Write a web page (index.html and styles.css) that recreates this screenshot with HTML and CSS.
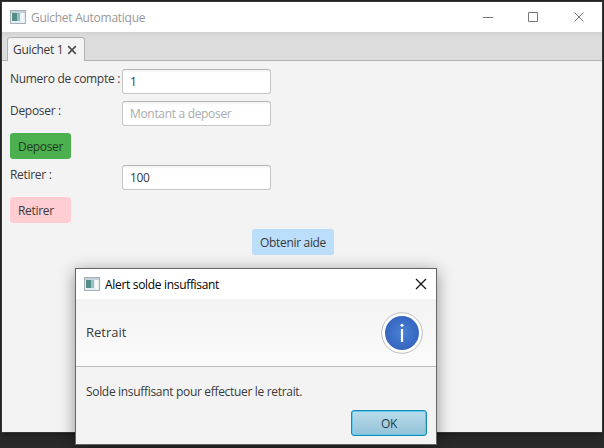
FILE: index.html
```html
<!DOCTYPE html>
<html lang="fr">
<head>
<meta charset="utf-8">
<title>Guichet Automatique</title>
<link rel="stylesheet" href="styles.css">
</head>
<body>
<main class="desktop">
  <section class="window main-window">
    <header class="titlebar">
      <svg class="app-icon" width="16" height="14" viewBox="0 0 16 14"><rect x=".5" y=".5" width="15" height="13" fill="#e4edf2" stroke="#a5b0b7"/><rect x="1" y="1" width="14" height="2" fill="#c6d2da"/><rect x="2" y="3" width="5" height="8" fill="#518f88"/><rect x="7" y="3" width="3" height="8" fill="#9abdc5"/><path d="M12.500 3v9" stroke="#fff" stroke-width="2"/></svg>
      <h1 class="title">Guichet Automatique</h1>
      <svg class="controls" width="104" height="12" viewBox="0 0 104 12" fill="none" stroke="#777"><path d="M1 6.500h10M46.500 1.500h9v9h-9zM92.500 1.500l9 9m0-9l-9 9"/></svg>
    </header>
    <nav class="tabs">
      <div class="tab"><span>Guichet 1</span><svg width="10" height="10" viewBox="0 0 10 10" fill="none" stroke="#505050" stroke-width="1.700"><path d="M1.200 1.200l7.600 7.600m0-7.600l-7.600 7.600"/></svg></div>
    </nav>
    <form class="form">
      <label for="compte">Numero de compte :</label><input id="compte" type="text" value="1">
      <label for="depot">Deposer :</label><input id="depot" type="text" placeholder="Montant a deposer">
      <button class="btn green" type="button">Deposer</button>
      <label for="retrait">Retirer :</label><input id="retrait" type="text" value="100">
      <button class="btn pink" type="button">Retirer</button>
      <button class="btn help" type="button">Obtenir aide</button>
    </form>
  </section>
  <section class="window dialog">
    <header class="titlebar">
      <svg class="app-icon" width="16" height="14" viewBox="0 0 16 14"><rect x=".5" y=".5" width="15" height="13" fill="#e4edf2" stroke="#a5b0b7"/><rect x="1" y="1" width="14" height="2" fill="#c6d2da"/><rect x="2" y="3" width="5" height="8" fill="#518f88"/><rect x="7" y="3" width="3" height="8" fill="#9abdc5"/><path d="M12.500 3v9" stroke="#fff" stroke-width="2"/></svg>
      <h2 class="title">Alert solde insuffisant</h2>
      <svg class="close" width="12" height="12" viewBox="0 0 12 12" fill="none" stroke="#111" stroke-width="1.200"><path d="M1 1l10 10m0-10l-10 10"/></svg>
    </header>
    <div class="banner">
      <span>Retrait</span>
      <svg width="42" height="42" viewBox="0 0 42 42">
        <defs><radialGradient id="blue"><stop offset="0" stop-color="#4a82d4"/><stop offset="1" stop-color="#3565c0"/></radialGradient></defs>
        <circle cx="21" cy="21" r="20.300" fill="#fff" stroke="#bdbdbd"/>
        <circle cx="21" cy="21" r="17" fill="url(#blue)"/>
        <circle cx="21" cy="13.200" r="1.500" fill="#fff"/><path d="M21 17v13" stroke="#fff" stroke-width="2.200"/>
      </svg>
    </div>
    <div class="message">
      <p>Solde insuffisant pour effectuer le retrait.</p>
      <button class="ok" type="button">OK</button>
    </div>
  </section>
</main>
</body>
</html>
```
FILE: styles.css
```css
* { box-sizing: border-box; }
body { margin: 0; font: 12px/17px "Open Sans", "Noto Sans", sans-serif; letter-spacing: -.32px; color: #3a3a3a; }
h1, h2, p { margin: 0; font: inherit; }
svg { display: block; flex: none; }
input, button { font: inherit; letter-spacing: inherit; color: inherit; margin: 0; }
.desktop { position: relative; width: 604px; height: 448px; overflow: hidden; background: #2a2a2b; }
.window { position: absolute; display: flex; flex-direction: column; background: #f3f3f3; }
.main-window { left: 2px; top: 2px; width: 600px; height: 430px; box-shadow: 0 0 0 1px #38383a, 0 1px 8px #111; }
.titlebar { display: flex; align-items: center; height: 30px; flex: none; padding-left: 8px; background: #fff; white-space: nowrap; }
.title { flex: 1; margin-left: 5px; }
.main-window .title { color: #999; letter-spacing: -.27px; }
.controls { margin-right: 16px; }
.tabs { display: flex; align-items: flex-end; height: 29px; flex: none; padding-left: 5px; border-bottom: 1px solid #b3b3b3; background: linear-gradient(#d2d2d2, #dcdcdc 5px); }
.tab { display: flex; align-items: center; justify-content: space-between; width: 78px; height: 24px; margin-bottom: -1px; padding: 0 7px 0 5px; border: 1px solid #b3b3b3; border-bottom: 0; border-radius: 3px 3px 0 0; background: #f3f3f3; white-space: nowrap; }
.form { display: grid; grid-template-columns: 110px 149px; grid-auto-rows: 25px; column-gap: 2px; row-gap: 7px; padding: 8px; }
.form label { padding-top: 1px; white-space: nowrap; letter-spacing: -.3px; }
.form input { width: 149px; height: 25px; padding: 0 7px; border: 1px solid #c5c5c5; border-top-color: #b5b5b5; border-radius: 3px; background: linear-gradient(#f3f3f3, #fff 3px); outline: 0; }
.form input::placeholder { color: #aaa; opacity: 1; }
.btn { grid-column: 1 / 3; width: 61px; height: 26px; padding: 0 8px; border: 0; border-radius: 3px; text-align: left; white-space: nowrap; }
.green { background: #4caf50; color: #203c22; }
.pink { background: #ffcdd2; }
.help { width: 82px; margin-left: 242px; background: #bbdefb; }
.dialog { left: 75px; top: 268px; width: 362px; height: 177px; border: 1px solid #656565; box-shadow: 0 3px 15px rgba(0, 0, 0, .4); }
.dialog .titlebar { color: #000; }
.close { margin-right: 9px; }
.banner { display: flex; align-items: center; justify-content: space-between; height: 68px; flex: none; padding: 0 13px 0 10px; border-bottom: 1px solid #bdbdbd; background: linear-gradient(#f3f3f3, #fbfbfb); font-size: 13px; letter-spacing: 0; }
.message { display: flex; flex-direction: column; flex: 1; padding: 16px 9px 8px 10px; white-space: nowrap; }
.ok { width: 76px; height: 26px; margin-top: auto; align-self: flex-end; padding: 0; border: 1px solid #168db7; border-radius: 3px; background: linear-gradient(#b9dbea, #94c3d8); box-shadow: inset 0 0 0 1px #62c7e8; color: #24414d; }
```
